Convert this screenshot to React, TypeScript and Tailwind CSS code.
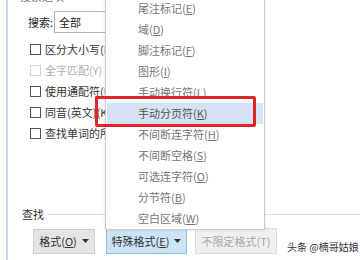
import React from "react";

const menuItems: { label: string; key: string }[] = [
  { label: "尾注标记", key: "E" },
  { label: "域", key: "D" },
  { label: "脚注标记", key: "F" },
  { label: "图形", key: "I" },
  { label: "手动换行符", key: "L" },
  { label: "手动分页符", key: "K" },
  { label: "不间断连字符", key: "H" },
  { label: "不间断空格", key: "S" },
  { label: "可选连字符", key: "O" },
  { label: "分节符", key: "B" },
  { label: "空白区域", key: "W" },
];

const options = [
  { label: "区分大小写(H)", disabled: false },
  { label: "全字匹配(Y)", disabled: true },
  { label: "使用通配符(U)", disabled: false },
  { label: "同音(英文)(K)", disabled: false },
  { label: "查找单词的所有形式(英文)(W)", disabled: false },
];

const Caret = () => (
  <svg width="7" height="4" viewBox="0 0 7 4" className="ml-[5px]">
    <path d="M0 0h7L3.5 4z" fill="#333" />
  </svg>
);

const App = () => {
  return (
    <div className="relative w-[360px] h-[260px] overflow-hidden bg-white text-[11px] text-[#333] font-['Noto_Sans_CJK_SC','Noto_Sans',sans-serif]">
      <div className="flex h-full">
        <div className="w-[6px]" />
        <div className="w-[2px] bg-[#c9d9ec]" />
        <div className="flex-1 flex flex-col pl-[12px]">
          <div className="-mt-[10px] h-[12px] leading-[12px] text-[#777]">搜索选项</div>

          <div className="mt-[9px] flex items-center h-[22px]">
            <span className="w-[34px] pl-[8px] text-[#222]">搜索:</span>
            <div className="w-[110px] h-[22px] border border-[#b4b4b4] flex items-center pl-[4px] text-[#222]">
              全部
            </div>
          </div>

          <div className="mt-[6px] flex flex-col">
            {options.map((o) => (
              <div key={o.label} className="h-[21px] flex items-center pl-[10px]">
                <span
                  className={
                    o.disabled
                      ? "w-[11px] h-[11px] border border-[#d4d4d4] mr-[4px]"
                      : "w-[11px] h-[11px] border border-[#555] mr-[4px]"
                  }
                />
                <span className={o.disabled ? "text-[#b0b0b0]" : "text-[#333]"}>{o.label}</span>
              </div>
            ))}
          </div>

          <div className="mt-[63px] flex items-center h-[14px] pl-[2px]">
            <span className="text-[#333]">查找</span>
            <div className="flex-1 ml-[4px] border-t border-[#dedede]" />
          </div>

          <div className="mt-[7px] flex items-center pl-[13px]">
            <div className="w-[62px] h-[25px] bg-[#e4e4e4] border border-[#cfcfcf] flex items-center justify-center text-[#333]">
              格式(<span className="underline">O</span>)
              <Caret />
            </div>
            <div className="ml-[11px] w-[81px] h-[26px] bg-[#cce4f7] border border-[#8ebfec] flex items-center justify-center text-[#333]">
              特殊格式(<span className="underline">E</span>)
              <Caret />
            </div>
            <div className="ml-[8px] w-[82px] h-[26px] bg-[#efefef] border border-[#d9d9d9] flex items-center justify-center text-[#a8a8a8]">
              不限定格式(T)
            </div>
            <div className="ml-[10px] mt-[11px] text-[10px] text-[#333] whitespace-nowrap">头条 @楠哥姑娘</div>
          </div>
        </div>
      </div>

      <div className="absolute left-[105px] top-[-5px] w-[160px] pt-[2px] bg-white border border-[#cbcbcb] shadow-[0_0_3px_rgba(0,0,0,0.12)]">
        {menuItems.map((m) => (
          <div
            key={m.label}
            className={
              m.key === "K"
                ? "h-[21px] mx-[1px] flex items-center pl-[31px] bg-[#d6e3f4] text-[#555]"
                : "h-[21px] mx-[1px] flex items-center pl-[31px] text-[#757575]"
            }
          >
            {m.label}(<span className="underline">{m.key}</span>)
          </div>
        ))}
      </div>

      <div className="absolute left-[95px] top-[96px] w-[161px] h-[31px] border-[3px] border-[#e0262b] rounded-[2px]" />
    </div>
  );
};

export default App;
